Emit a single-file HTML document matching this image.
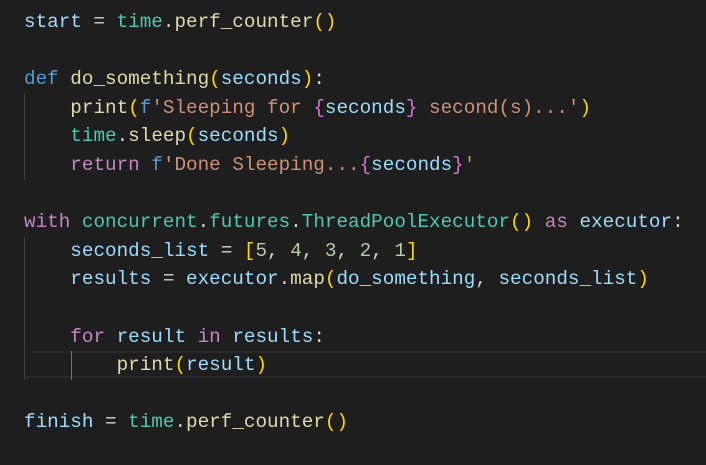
<!DOCTYPE html>
<html><head><meta charset="utf-8"><style>
html,body{margin:0;padding:0;background:#1e1e1e;width:706px;height:465px;overflow:hidden}
.code{position:absolute;left:24px;top:8px;font-family:"Liberation Mono",monospace;font-size:19.3px;line-height:28.6px;color:#d4d4d4;white-space:pre}
.v{color:#9cdcfe}.m{color:#4ec9b0}.f{color:#dcdcaa}.k{color:#569cd6}.s{color:#ce9178}.c{color:#c586c0}.b{color:#ffd700}.p{color:#da70d6}.n{color:#b5cea8}
.g{position:absolute;width:1px;background:#404040}
.hl{position:absolute;left:24px;right:0;top:351px;height:27px;border-top:2px solid #282828;border-bottom:2px solid #282828;box-sizing:border-box}
</style></head><body>
<div class="hl"></div>
<div class="g" style="left:24px;top:94px;height:86px"></div>
<div class="g" style="left:24px;top:237px;height:143px"></div>
<div class="g" style="left:71px;top:351px;height:29px;background:#707070"></div>
<div class="code"><span class="v">start</span> = <span class="m">time</span>.<span class="f">perf_counter</span><span class="b">()</span>

<span class="k">def</span> <span class="f">do_something</span><span class="b">(</span><span class="v">seconds</span><span class="b">)</span>:
    <span class="f">print</span><span class="b">(</span><span class="k">f</span><span class="s">'Sleeping for </span><span class="p">{</span><span class="v">seconds</span><span class="p">}</span><span class="s"> second(s)...'</span><span class="b">)</span>
    <span class="m">time</span>.<span class="f">sleep</span><span class="b">(</span><span class="v">seconds</span><span class="b">)</span>
    <span class="c">return</span> <span class="k">f</span><span class="s">'Done Sleeping...</span><span class="p">{</span><span class="v">seconds</span><span class="p">}</span><span class="s">'</span>

<span class="c">with</span> <span class="m">concurrent</span>.<span class="m">futures</span>.<span class="m">ThreadPoolExecutor</span><span class="b">()</span> <span class="c">as</span> <span class="v">executor</span>:
    <span class="v">seconds_list</span> = <span class="b">[</span><span class="n">5</span>, <span class="n">4</span>, <span class="n">3</span>, <span class="n">2</span>, <span class="n">1</span><span class="b">]</span>
    <span class="v">results</span> = <span class="v">executor</span>.<span class="f">map</span><span class="b">(</span><span class="v">do_something</span>, <span class="v">seconds_list</span><span class="b">)</span>

    <span class="c">for</span> <span class="v">result</span> <span class="c">in</span> <span class="v">results</span>:
        <span class="f">print</span><span class="b">(</span><span class="v">result</span><span class="b">)</span>

<span class="v">finish</span> = <span class="m">time</span>.<span class="f">perf_counter</span><span class="b">()</span></div>
</body></html>
